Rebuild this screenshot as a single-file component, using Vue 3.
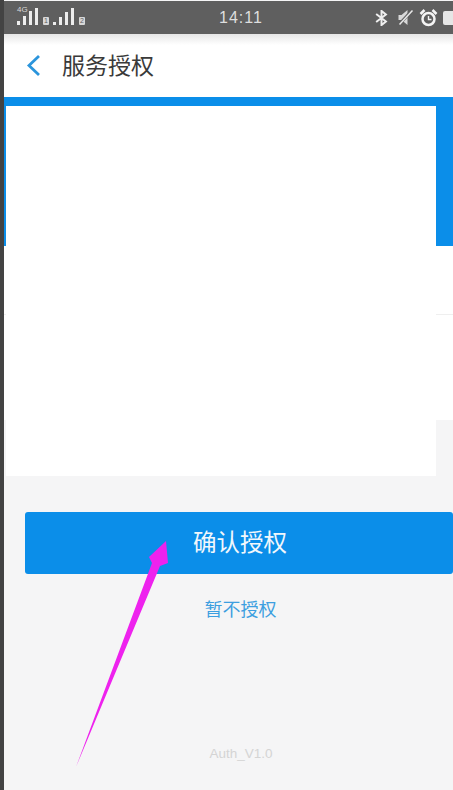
<script setup>
const leftBars = [4, 9, 14, 17]
const rightBars = [3, 8, 13, 17]
</script>

<template>
  <div class="screen">
    <div class="edge"></div>
    <div class="phone">
      <header class="status">
        <div class="signals">
          <span class="net">4G</span>
          <div class="bars">
            <i v-for="h in leftBars" :key="'a' + h" :style="{ height: h + 'px' }"></i>
            <b class="sim">1</b>
          </div>
          <div class="bars">
            <i v-for="h in rightBars" :key="'b' + h" :style="{ height: h + 'px' }"></i>
            <b class="sim">2</b>
          </div>
        </div>
        <span class="time">14:11</span>
        <div class="icons">
          <svg class="bt" width="15" height="16" viewBox="0 0 15 18" fill="none" stroke="#efefef" stroke-width="2.200">
            <path d="M1.500 4.500 12.500 13 7.500 17V1l5 4L1.500 13.500" />
          </svg>
          <svg width="17" height="17" viewBox="0 0 16 17">
            <path d="M1 6h3l6-5v15l-6-5H1z" fill="#d8d8d8" />
            <path d="M1 16 15 1" stroke="#5f5f5f" stroke-width="3" />
            <path d="M2 15.500 15 1.500" stroke="#e8e8e8" stroke-width="1.500" />
          </svg>
          <svg width="19" height="18" viewBox="0 0 18 18" fill="none">
            <circle cx="9" cy="10" r="6" stroke="#f4f4f4" stroke-width="2.500" />
            <path d="M9 7v3.500h3" stroke="#f4f4f4" stroke-width="1.400" />
            <path d="M1 5l4-4M17 5l-4-4" stroke="#f4f4f4" stroke-width="2.500" />
          </svg>
          <span class="battery"></span>
        </div>
      </header>

      <nav class="nav">
        <svg class="back" width="15" height="23" viewBox="0 0 15 23" fill="none">
          <path d="M13 2 3 11.500 13 21" stroke="#2b95dc" stroke-width="2.800" />
        </svg>
        <h1>服务授权</h1>
      </nav>

      <section class="hero"></section>
      <section class="rows">
        <div class="row first"></div>
        <div class="row"></div>
      </section>

      <main class="actions">
        <button class="confirm">确认授权</button>
        <a class="later">暂不授权</a>
        <span class="version">Auth_V1.0</span>
      </main>

      <div class="mask"></div>
    </div>

    <svg class="arrow" width="453" height="790" viewBox="0 0 453 790">
      <path d="M76 767 152 563 149 557 166 541 168 563 160 566Z" fill="#ee22ee" />
    </svg>
  </div>
</template>

<style scoped>
.screen {
  position: relative;
  display: flex;
  width: 453px;
  height: 790px;
  overflow: hidden;
  font-family: "Liberation Sans", "Noto Sans CJK SC", sans-serif;
  background: #f5f5f6;
}
.edge {
  flex: 0 0 4px;
  background: #434343;
}
.phone {
  position: relative;
  flex: 1;
  display: flex;
  flex-direction: column;
  min-width: 0;
}
.status {
  flex: 0 0 33px;
  margin-top: 1px;
  display: flex;
  align-items: center;
  justify-content: space-between;
  padding: 0 0 0 13px;
  background: #5f5f5f;
  color: #e8e8e8;
  position: relative;
  box-sizing: border-box;
}
.signals {
  position: relative;
  display: flex;
  align-items: flex-end;
  gap: 4px;
  height: 17px;
  margin-top: -2px;
}
.net {
  position: absolute;
  left: 0;
  top: -2px;
  font-size: 8px;
  line-height: 8px;
  color: #d8d8d8;
}
.bars {
  display: flex;
  align-items: flex-end;
  gap: 3px;
}
.bars i {
  display: block;
  width: 3px;
  background: #ededed;
}
.sim {
  width: 6px;
  height: 8px;
  margin-left: 2px;
  border-radius: 1px;
  background: #d8d8d8;
  font-size: 7px;
  line-height: 8px;
  text-align: center;
  font-weight: 400;
  color: #5f5f5f;
}
.time {
  position: absolute;
  left: 215px;
  top: 7px;
  font-size: 16px;
  line-height: 20px;
  letter-spacing: 1px;
  color: #dedede;
}
.icons {
  display: flex;
  align-items: center;
  gap: 5px;
}
.bt {
  margin-right: 3px;
}
.battery {
  display: block;
  width: 10px;
  height: 14px;
  background: #e6e6e6;
  border-radius: 2px 0 0 2px;
}
.nav {
  flex: 0 0 63px;
  display: flex;
  align-items: center;
  padding-left: 22px;
  background: linear-gradient(#e6e6e6, #ffffff 11px);
}
.back {
  flex: none;
}
h1 {
  margin: 0 0 0 21px;
  font-size: 23px;
  line-height: 30px;
  font-weight: 400;
  color: #3a3a3a;
}
.hero {
  flex: 0 0 149px;
  background: #0b8ee9;
}
.rows {
  flex: 0 0 174px;
  display: flex;
  flex-direction: column;
  background: #fff;
}
.row {
  flex: 1;
}
.row.first {
  flex: 0 0 69px;
  border-bottom: 1px solid #efefef;
  box-sizing: border-box;
}
.actions {
  flex: 1;
  display: flex;
  flex-direction: column;
  align-items: center;
  padding: 92px 0 0 21px;
  box-sizing: border-box;
}
.confirm {
  align-self: stretch;
  height: 62px;
  border: 0;
  border-radius: 3px;
  padding: 0 0 4px 2px;
  background: #0b8ee9;
  color: #f1f7fc;
  font: inherit;
  font-size: 23.500px;
}
.later {
  margin-top: 24px;
  margin-left: 3px;
  font-size: 18px;
  line-height: 24px;
  color: #3d9fe0;
}
.version {
  margin-top: 124px;
  margin-left: 4px;
  font-size: 13.500px;
  line-height: 16px;
  color: #d4d4d4;
}
.mask {
  position: absolute;
  left: 2px;
  top: 106px;
  width: 430px;
  height: 370px;
  background: #fff;
}
.arrow {
  position: absolute;
  left: 0;
  top: 0;
  pointer-events: none;
}
</style>
